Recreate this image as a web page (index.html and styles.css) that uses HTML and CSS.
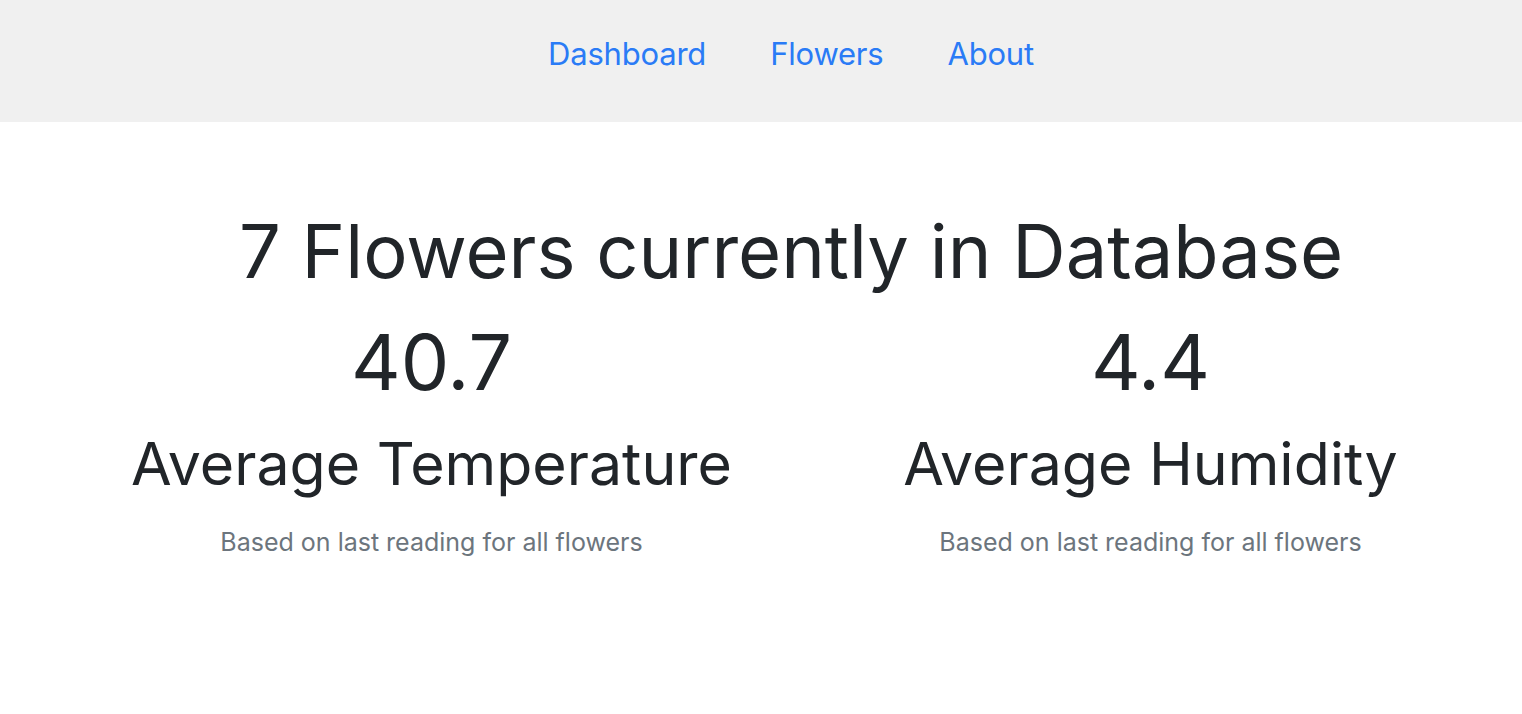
FILE: index.html
```html
<!DOCTYPE html>
<html>
<head>
<meta charset="utf-8">
<link rel="stylesheet" href="styles.css">
</head>
<body>
<nav class="topbar">
  <div class="wrap nav-links">
    <a class="nav-link" href="#">Dashboard</a>
    <a class="nav-link" href="#">Flowers</a>
    <a class="nav-link" href="#">About</a>
  </div>
</nav>
<main class="wrap main">
  <h1 class="title">7 Flowers currently in Database</h1>
  <div class="stats">
    <section class="stat">
      <div class="stat-value">40.7</div>
      <h2 class="stat-label">Average Temperature</h2>
      <p class="stat-note">Based on last reading for all flowers</p>
    </section>
    <section class="stat">
      <div class="stat-value">4.4</div>
      <h2 class="stat-label">Average Humidity</h2>
      <p class="stat-note">Based on last reading for all flowers</p>
    </section>
  </div>
</main>
</body>
</html>
```
FILE: styles.css
```css
* { box-sizing: border-box; }
body {
  margin: 0;
  background: #ffffff;
  font-family: Inter, "Noto Sans", "Liberation Sans", sans-serif;
  color: #212529;
}
.wrap {
  margin-left: 72px;
  width: 1438px;
}
.topbar {
  background: #f0f0f0;
  height: 122px;
}
.nav-links {
  height: 100%;
  display: flex;
  justify-content: center;
  align-items: center;
  padding-bottom: 16px;
}
.nav-link {
  color: #2a7bf6;
  text-decoration: none;
  font-size: 31px;
  letter-spacing: -0.2px;
  line-height: 1;
  padding: 0 32px;
}
.main {
  text-align: center;
  padding-top: 85px;
}
.title {
  margin: 0;
  font-size: 74px;
  font-weight: 400;
  line-height: 1.2;
}
.stats {
  display: grid;
  grid-template-columns: 1fr 1fr;
  margin-top: 20px;
}
.stat-value {
  font-size: 77px;
  line-height: 1.2;
}
.stat-label {
  margin: 21px 0 0;
  font-size: 59px;
  font-weight: 400;
  line-height: 1.2;
}
.stat-note {
  margin: 24px 0 0;
  font-size: 25px;
  line-height: 1.5;
  color: #6c757d;
}
```
